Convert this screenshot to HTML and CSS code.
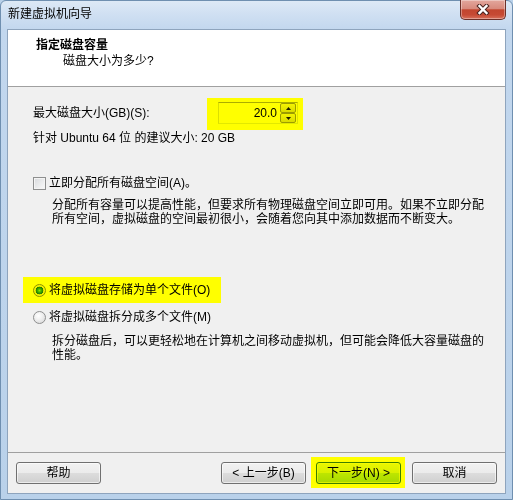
FILE: index.html
```html
<!DOCTYPE html>
<html lang="zh-CN">
<head>
<meta charset="utf-8">
<title>新建虚拟机向导</title>
<link rel="stylesheet" href="styles.css">
</head>
<body>
<div class="window">
  <div class="titlebar">
    <span class="title">新建虚拟机向导</span>
    <div class="close-btn">
      <svg width="14" height="11" viewBox="0 0 14 11"><path d="M3.5 2 L10.5 9 M10.5 2 L3.5 9" stroke="#4a2420" stroke-width="4.4" stroke-linecap="square" fill="none"/><path d="M3.5 2 L10.5 9 M10.5 2 L3.5 9" stroke="#fff" stroke-width="2.4" stroke-linecap="square" fill="none"/></svg>
    </div>
  </div>
  <div class="client">
    <div class="header">
      <div class="h-title">指定磁盘容量</div>
      <div class="h-sub">磁盘大小为多少?</div>
    </div>
    <div class="content">
      <div class="size-row">
        <span class="size-label">最大磁盘大小(GB)(S):</span>
        <div class="hl hl-spin">
          <div class="spin">
            <span class="spin-value">20.0</span>
            <div class="spin-btns">
              <span class="spin-btn"><svg width="5" height="3" viewBox="0 0 5 3"><path d="M2.5 0 L5 3 L0 3 Z" fill="#1e1e1e"/></svg></span>
              <span class="spin-btn"><svg width="5" height="3" viewBox="0 0 5 3"><path d="M0 0 L5 0 L2.5 3 Z" fill="#1e1e1e"/></svg></span>
            </div>
          </div>
        </div>
      </div>
      <div class="hint">针对 Ubuntu 64 位 的建议大小: 20 GB</div>
      <div class="check-row"><span class="checkbox"></span><span>立即分配所有磁盘空间(A)。</span></div>
      <p class="desc">分配所有容量可以提高性能，但要求所有物理磁盘空间立即可用。如果不立即分配所有空间，虚拟磁盘的空间最初很小，会随着您向其中添加数据而不断变大。</p>
      <div class="hl hl-radio"><div class="radio-row"><span class="radio checked"></span><span>将虚拟磁盘存储为单个文件(O)</span></div></div>
      <div class="radio-row r2"><span class="radio"></span><span>将虚拟磁盘拆分成多个文件(M)</span></div>
      <p class="desc desc2">拆分磁盘后，可以更轻松地在计算机之间移动虚拟机，但可能会降低大容量磁盘的性能。</p>
    </div>
    <div class="footer">
      <button class="btn">帮助</button>
      <span class="spacer"></span>
      <button class="btn">&lt; 上一步(B)</button>
      <div class="hl hl-btn"><button class="btn default">下一步(N) &gt;</button></div>
      <button class="btn cancel">取消</button>
    </div>
  </div>
</div>
</body>
</html>
```
FILE: styles.css
```css
* { box-sizing: border-box; margin: 0; padding: 0; }
html, body { width: 513px; height: 500px; overflow: hidden; }
body {
  font-family: "Liberation Sans", "Noto Sans CJK SC", sans-serif;
  font-size: 12px;
  color: #000;
  background: #b9d1ea;
}
.window {
  width: 513px;
  height: 500px;
  display: flex;
  flex-direction: column;
  border: 1px solid #6f8fb0;
  border-radius: 6px 6px 0 0;
  background: linear-gradient(to bottom, #dde9f6 0, #cfdff2 14px, #c2d7ee 29px, #b9d1ea 100%);
  padding: 0 6px 5px 6px;
}
.titlebar {
  flex: 0 0 28px;
  display: flex;
  justify-content: space-between;
  align-items: flex-start;
}
.title { margin-top: 5px; padding-left: 1px; line-height: 16px; color: #000; }
.close-btn {
  width: 46px;
  height: 20px;
  margin-top: -1px;
  border: 1px solid #6b3029;
  border-top: none;
  border-radius: 0 0 5px 5px;
  background: linear-gradient(#e3a79d 0, #d88a7d 45%, #c2462f 52%, #c64a34 78%, #d7705b 100%);
  box-shadow: inset 0 0 0 1px rgba(255, 255, 255, 0.35);
  display: flex;
  align-items: center;
  justify-content: center;
}
.client {
  flex: 1;
  display: flex;
  flex-direction: column;
  border: 1px solid #8ea4bd;
  background: #f0f0f0;
}
.header {
  flex: 0 0 57px;
  background: #fff;
  border-bottom: 1px solid #a0a0a0;
  padding: 7px 0 0 28px;
}
.h-title { font-weight: bold; line-height: 16px; }
.h-sub { line-height: 16px; margin-left: 27px; }
.content {
  flex: 1;
  padding-left: 25px;
}
.size-row { display: flex; align-items: flex-start; margin-top: 11px; }
.size-label { flex: 0 0 174px; line-height: 16px; margin-top: 7px; }
.hl { background: #ffff00; }
.hl > * { mix-blend-mode: multiply; }
.hl-spin { padding: 4px 5px 6px 11px; }
.spin {
  width: 80px;
  height: 22px;
  border: 1px solid;
  border-color: #abadb3 #e2e3ea #e3e9ef #dbdfe6;
  background: #fff;
  display: flex;
  align-items: center;
  justify-content: flex-end;
  padding-right: 1px;
}
.spin-value { line-height: 16px; margin-right: 3px; }
.spin-btns { display: flex; flex-direction: column; width: 16px; height: 20px; }
.spin-btn {
  height: 10px;
  border: 1px solid #9c9c9c;
  border-radius: 2px;
  background: linear-gradient(#f4f4f4, #dcdcdc);
  display: flex;
  align-items: center;
  justify-content: center;
}
.hint { line-height: 16px; }
.check-row { display: flex; align-items: center; margin-top: 29px; line-height: 16px; }
.checkbox {
  width: 13px;
  height: 13px;
  margin-right: 3px;
  border: 1px solid #8e8f8f;
  background: linear-gradient(135deg, #d8dadd, #fafafa);
  box-shadow: inset 0 0 0 1px #f4f4f4;
}
.desc { margin: 7px 0 0 19px; width: 438px; line-height: 14px; }
.desc2 { margin-top: 9px; }
.hl-radio { width: fit-content; margin: 51px 0 0 -10px; padding: 5px 11px 5px 10px; }
.radio-row { display: flex; align-items: center; line-height: 16px; }
.r2 { margin-top: 6px; }
.radio {
  width: 13px;
  height: 13px;
  margin-right: 3px;
  border-radius: 50%;
  border: 1px solid #8e8f8f;
  background: radial-gradient(circle at 40% 35%, #ffffff 0, #f0f0f0 40%, #d2d2d2 100%);
}
.radio.checked {
  background: radial-gradient(circle at 50% 50%, #8fe66a 0, #45b82a 1.6px, #1f7a12 3.6px, #e9e9e9 4.1px, #f5f5f5 5px, #d0d0d0 100%);
}
.footer {
  flex: 0 0 41px;
  border-top: 1px solid #a0a0a0;
  display: flex;
  align-items: flex-start;
  padding: 9px 8px 0 8px;
}
.spacer { flex: 1; }
.btn {
  width: 85px;
  height: 22px;
  font: inherit;
  line-height: 20px;
  color: #000;
  border: 1px solid #707070;
  border-radius: 3px;
  background: linear-gradient(#f2f2f2 0, #ebebeb 50%, #dddddd 50%, #cfcfcf 100%);
  box-shadow: inset 0 0 0 1px rgba(255, 255, 255, 0.6);
}
.btn.default {
  border-color: #3c7fb1;
  background: linear-gradient(#eaf6fd 0, #d9f0fc 50%, #bee6fd 50%, #a7d9f5 100%);
}
.hl-btn { margin: -5px 0 -4px 5px; padding: 5px 4px 4px 5px; }
.cancel { margin-left: 7px; }
```
